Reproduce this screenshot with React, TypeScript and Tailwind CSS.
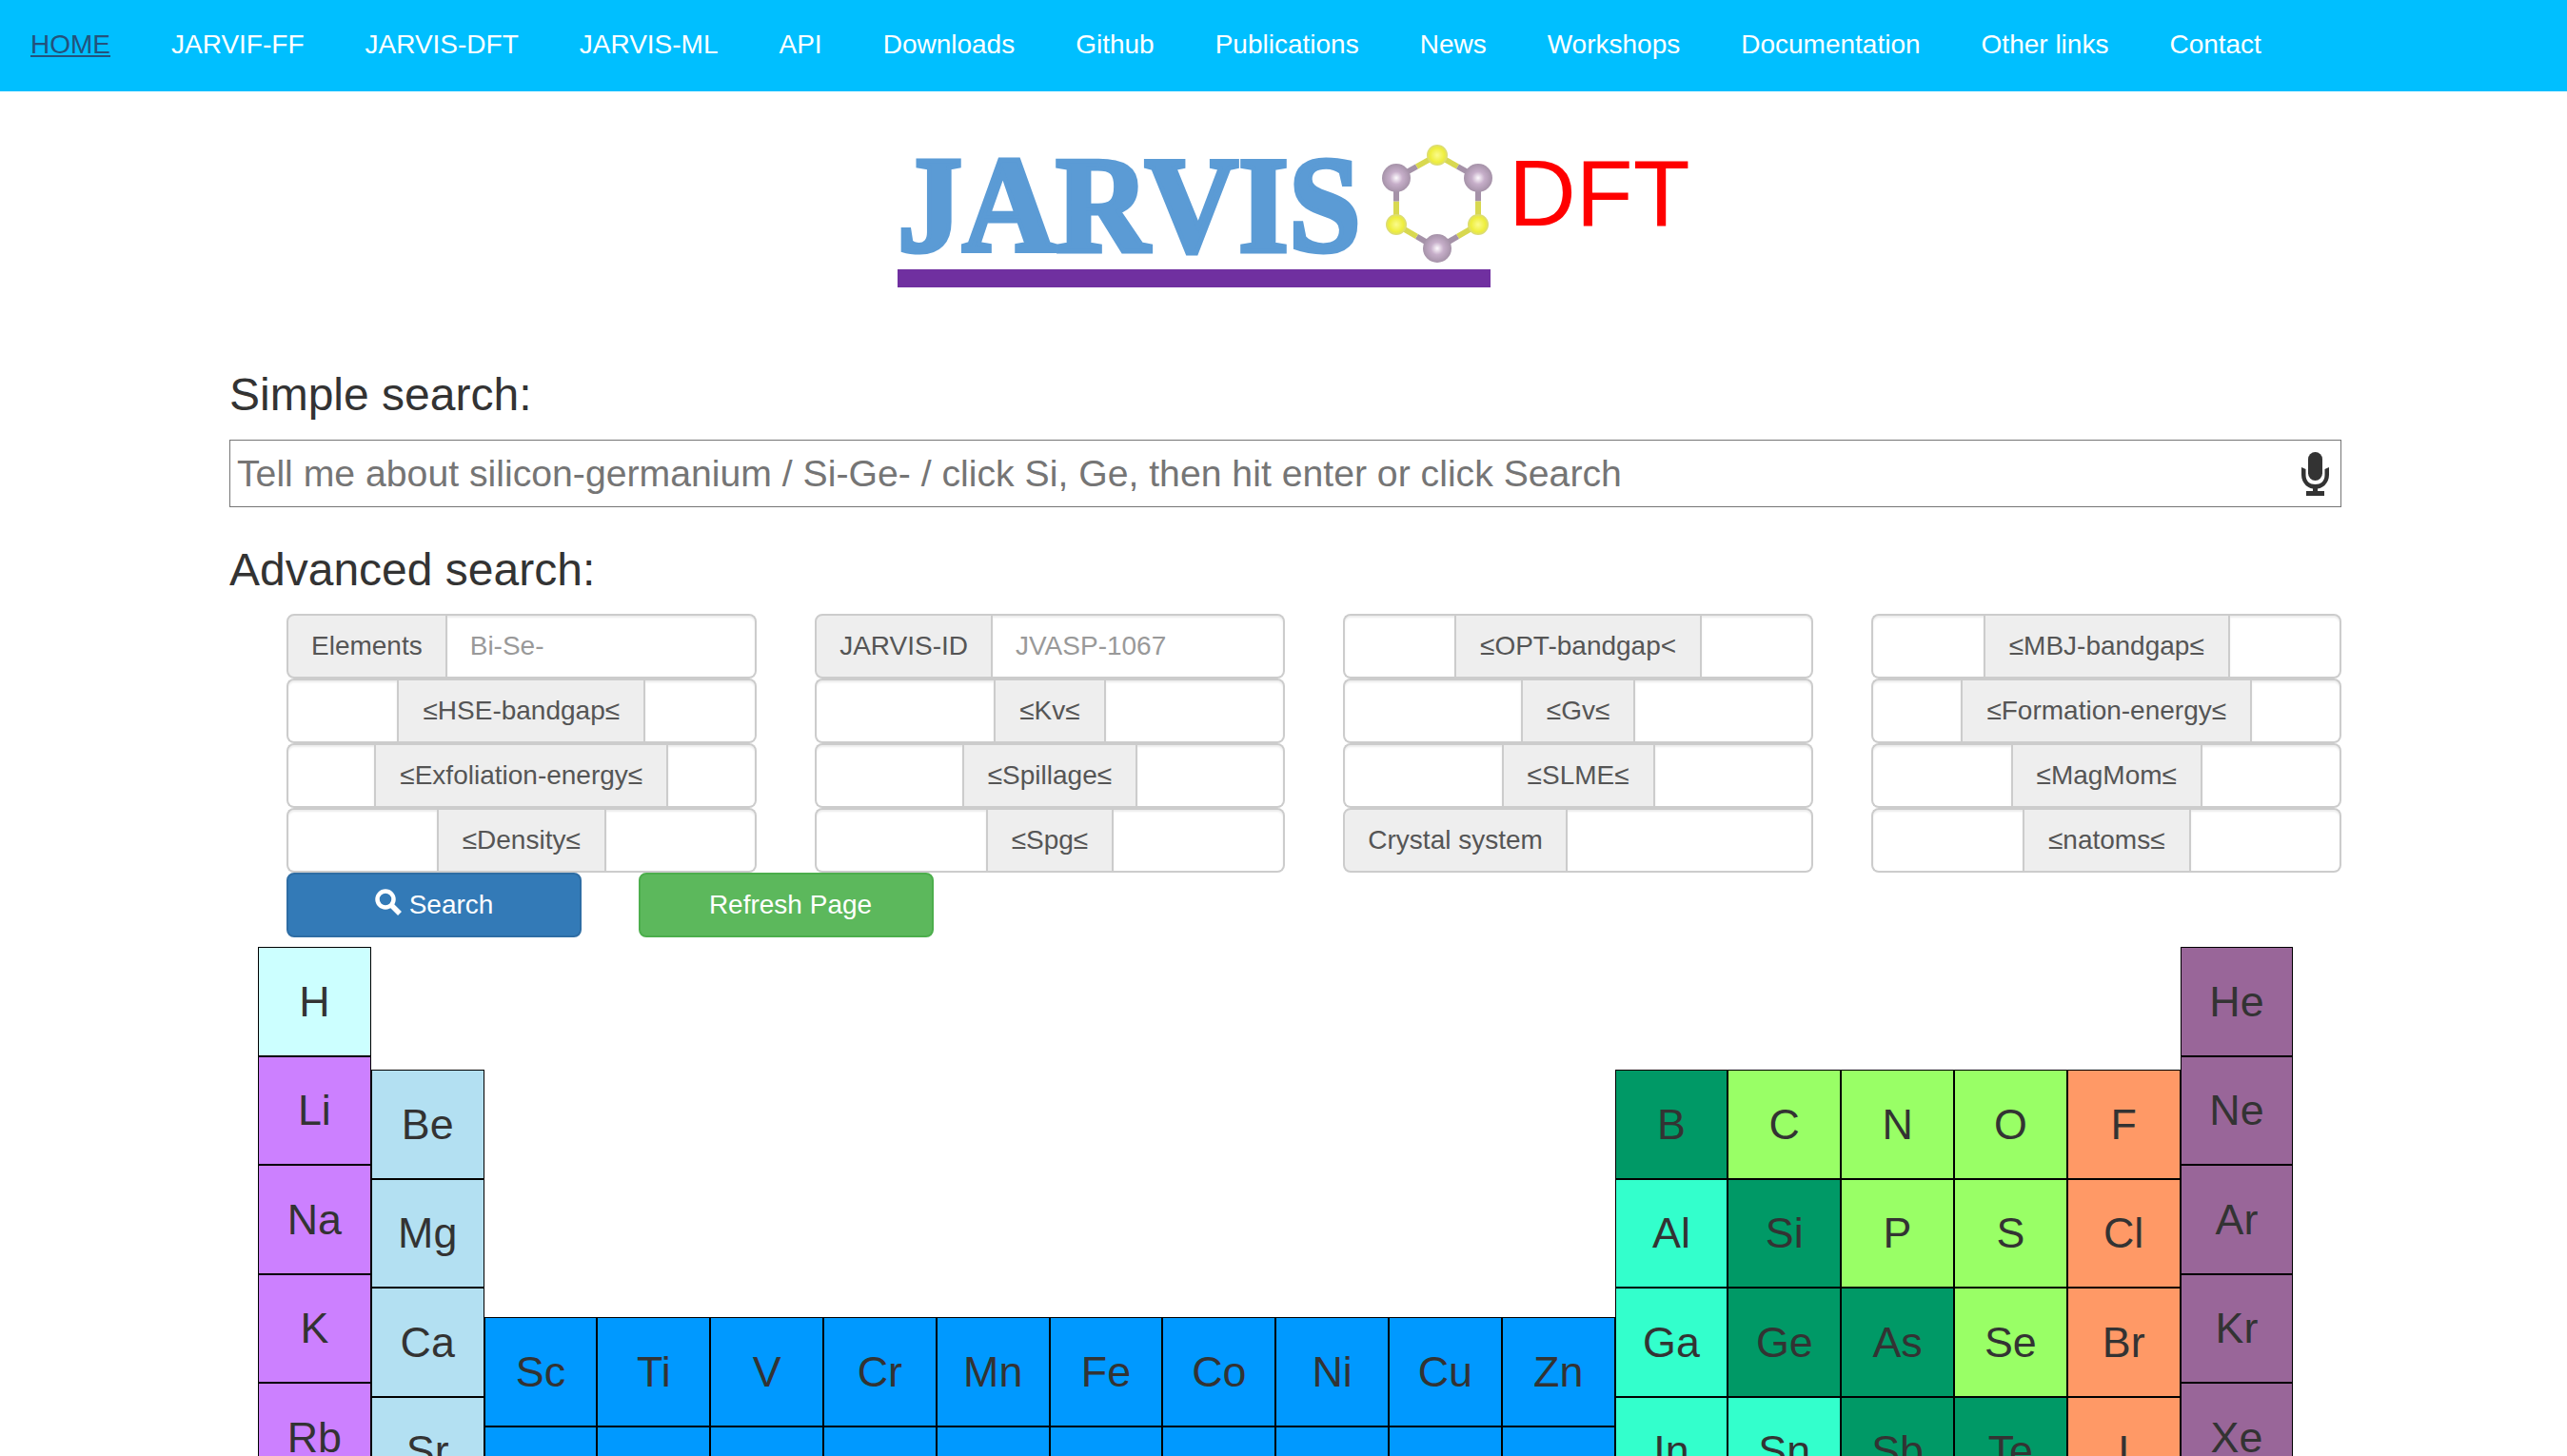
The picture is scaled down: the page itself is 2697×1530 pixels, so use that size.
const nav = ["HOME","JARVIF-FF","JARVIS-DFT","JARVIS-ML","API","Downloads","Github","Publications","News","Workshops","Documentation","Other links","Contact"];

type Cell = { s: string; c: string };
const mk = (list: string, c: string): Cell[] => list.split(" ").map((s) => ({ s, c }));
const alkali = "bg-[#cc80ff]";
const earth = "bg-[#b3e0f2]";
const trans = "bg-[#0099ff]";
const metal = "bg-[#33ffcc]";
const metalloid = "bg-[#009966]";
const nonmetal = "bg-[#99ff66]";
const halogen = "bg-[#ff9966]";
const noble = "bg-[#996699]";

const tcol = (a: string, b: string) => ({ mt: "mt-[389px]", cells: mk(`${a} ${b}`, trans) });
const columns: { mt: string; cells: Cell[] }[] = [
  { mt: "mt-0", cells: [{ s: "H", c: "bg-[#ccffff]" }, ...mk("Li Na K Rb", alkali)] },
  { mt: "mt-[129px]", cells: mk("Be Mg Ca Sr", earth) },
  tcol("Sc", "Y"), tcol("Ti", "Zr"), tcol("V", "Nb"), tcol("Cr", "Mo"), tcol("Mn", "Tc"),
  tcol("Fe", "Ru"), tcol("Co", "Rh"), tcol("Ni", "Pd"), tcol("Cu", "Ag"), tcol("Zn", "Cd"),
  { mt: "mt-[129px]", cells: [{ s: "B", c: metalloid }, ...mk("Al Ga In", metal)] },
  { mt: "mt-[129px]", cells: [{ s: "C", c: nonmetal }, { s: "Si", c: metalloid }, { s: "Ge", c: metalloid }, { s: "Sn", c: metal }] },
  { mt: "mt-[129px]", cells: [{ s: "N", c: nonmetal }, { s: "P", c: nonmetal }, { s: "As", c: metalloid }, { s: "Sb", c: metalloid }] },
  { mt: "mt-[129px]", cells: [{ s: "O", c: nonmetal }, { s: "S", c: nonmetal }, { s: "Se", c: nonmetal }, { s: "Te", c: metalloid }] },
  { mt: "mt-[129px]", cells: mk("F Cl Br I", halogen) },
  { mt: "mt-0", cells: mk("He Ne Ar Kr Xe", noble) },
];

const inputCls = "min-w-0 w-0 flex-1 h-full bg-white border-2 border-[#ccc] px-[24px] text-[28px] text-[#555] placeholder:text-[#999] outline-none shadow-[inset_0_2px_2px_rgba(0,0,0,0.075)]";
const addonCls = "h-full flex items-center whitespace-nowrap bg-[#eee] border-2 border-[#ccc] text-[28px] text-[#555]";

function Range({ label }: { label: string }) {
  return (
    <div className="flex h-[68px]">
      <input aria-label={label} className={`${inputCls} border-r-0 rounded-l-[8px]`} />
      <span className={`${addonCls} px-[25px]`}>{label}</span>
      <input aria-label={label} className={`${inputCls} border-l-0 rounded-r-[8px]`} />
    </div>
  );
}

function Labeled({ label, placeholder }: { label: string; placeholder?: string }) {
  return (
    <div className="flex h-[68px]">
      <span className={`${addonCls} px-[24px] rounded-l-[8px]`}>{label}</span>
      <input aria-label={label} placeholder={placeholder} className={`${inputCls} border-l-0 rounded-r-[8px]`} />
    </div>
  );
}

function Molecule() {
  const atoms = [
    { x: 67, y: 12, r: 11, c: "url(#ya)" },
    { x: 110, y: 36, r: 15, c: "url(#pa)" },
    { x: 110, y: 85, r: 11, c: "url(#ya)" },
    { x: 67, y: 110, r: 15, c: "url(#pa)" },
    { x: 24, y: 85, r: 11, c: "url(#ya)" },
    { x: 24, y: 36, r: 15, c: "url(#pa)" },
  ];
  return (
    <svg width="134" height="128" viewBox="0 0 134 128" className="ml-[15px] shrink-0">
      <defs>
        <radialGradient id="ya"><stop offset="0" stopColor="#fbfb8c" /><stop offset="0.7" stopColor="#eeee3c" /><stop offset="1" stopColor="#d9d97c" /></radialGradient>
        <radialGradient id="pa"><stop offset="0" stopColor="#fdfafd" /><stop offset="0.45" stopColor="#c6aec9" /><stop offset="1" stopColor="#a592a8" /></radialGradient>
      </defs>
      {atoms.map((a, i) => {
        const b = atoms[(i + 1) % atoms.length];
        const mx = (a.x + b.x) / 2;
        const my = (a.y + b.y) / 2;
        const yellowFirst = i % 2 === 0;
        return (
          <g key={i} strokeWidth="6">
            <line x1={a.x} y1={a.y} x2={mx} y2={my} stroke={yellowFirst ? "#d8d850" : "#a592a8"} />
            <line x1={mx} y1={my} x2={b.x} y2={b.y} stroke={yellowFirst ? "#a592a8" : "#d8d850"} />
          </g>
        );
      })}
      {atoms.map((a, i) => <circle key={i} cx={a.x} cy={a.y} r={a.r} fill={a.c} />)}
    </svg>
  );
}

export default function App() {
  return (
    <div className="h-[1530px] overflow-hidden bg-white text-[#333] font-['Liberation_Sans',Arial,sans-serif]">
      <nav className="h-[96px] bg-[#00bfff] flex items-center">
        {nav.map((n, i) => (
          <a key={n} className={`px-[32px] text-[28px] leading-[40px] -translate-y-[1px] whitespace-nowrap ${i === 0 ? "text-[#23527c] underline" : "text-white"}`}>{n}</a>
        ))}
      </nav>

      <header className="flex items-start pl-[943px] pt-[55px] h-[292px]">
        <div className="w-[623px] shrink-0 flex flex-col">
          <div className="flex items-start h-[132px]">
            <span className="w-[485px] -mt-[1px] origin-left scale-x-[0.945] text-[144px] leading-[132px] font-bold text-[#5b9bd5] [-webkit-text-stroke:5px_#5b9bd5] font-['Liberation_Serif',serif] whitespace-nowrap">JARVIS</span>
            <Molecule />
          </div>
          <div className="relative z-10 h-[19px] bg-[#7030a0]" />
        </div>
        <span className="ml-[19px] -mt-[3px] text-[98px] leading-[110px] text-[#ff0000] whitespace-nowrap">DFT</span>
      </header>

      <main className="pl-[241px] pr-[237px]">
        <h3 className="text-[48px] leading-[53px] font-normal">Simple search:</h3>
        <div className="mt-[21px] relative h-[71px]">
          <input
            placeholder="Tell me about silicon-germanium / Si-Ge- / click Si, Ge, then hit enter or click Search"
            className="w-full h-full border border-[#767676] pl-[7px] pr-[50px] text-[39.2px] placeholder:text-[#757575] outline-none"
          />
          <svg viewBox="0 0 29 46" width="29" height="46" className="absolute right-[13px] top-[13px]" fill="#333">
            <rect x="7" y="0" width="15" height="30" rx="7.5" />
            <path d="M0 16 L4.5 18 V24 C4.5 31 9 34 14.5 34 C20 34 24.5 31 24.5 24 V18 L29 16 V24 C29 32 23 38 17 38.5 V41 H24 V46 H5 V41 H12 V38.5 C6 38 0 32 0 24 Z" />
          </svg>
        </div>

        <h3 className="mt-[39px] text-[48px] leading-[53px] font-normal">Advanced search:</h3>

        <div className="mt-[20px] ml-[60px] grid grid-cols-4 gap-x-[61.67px]">
          <Labeled label="Elements" placeholder="Bi-Se-" />
          <Labeled label="JARVIS-ID" placeholder="JVASP-1067" />
          <Range label="≤OPT-bandgap<" />
          <Range label="≤MBJ-bandgap≤" />
          <Range label="≤HSE-bandgap≤" />
          <Range label="≤Kv≤" />
          <Range label="≤Gv≤" />
          <Range label="≤Formation-energy≤" />
          <Range label="≤Exfoliation-energy≤" />
          <Range label="≤Spillage≤" />
          <Range label="≤SLME≤" />
          <Range label="≤MagMom≤" />
          <Range label="≤Density≤" />
          <Range label="≤Spg≤" />
          <Labeled label="Crystal system" />
          <Range label="≤natoms≤" />
        </div>

        <div className="ml-[60px] flex gap-[60px]">
          <button className="w-[310px] h-[68px] rounded-[8px] bg-[#337ab7] border-2 border-[#2e6da4] text-white text-[28px] flex items-center justify-center gap-[8px]">
            <svg viewBox="0 0 28 28" width="28" height="28" className="-mt-[6px]" fill="none" stroke="#fff" strokeWidth="4.5">
              <circle cx="11" cy="11" r="8.5" />
              <path d="M17 17l9 9" strokeWidth="5.5" />
            </svg>
            Search
          </button>
          <button className="w-[310px] h-[68px] rounded-[8px] bg-[#5cb85c] border-2 border-[#4cae4c] text-white text-[28px] pl-[9px]">Refresh Page</button>
        </div>

        <div className="mt-[10px] ml-[30px] flex items-start">
          {columns.map((col, i) => (
            <div key={i} className={`w-[118.8px] shrink-0 ${col.mt}`}>
              {col.cells.map((c) => (
                <div key={c.s} className={`h-[114.5px] border border-black flex items-center justify-center text-[44.8px] ${c.c}`}>{c.s}</div>
              ))}
            </div>
          ))}
        </div>
      </main>
    </div>
  );
}
